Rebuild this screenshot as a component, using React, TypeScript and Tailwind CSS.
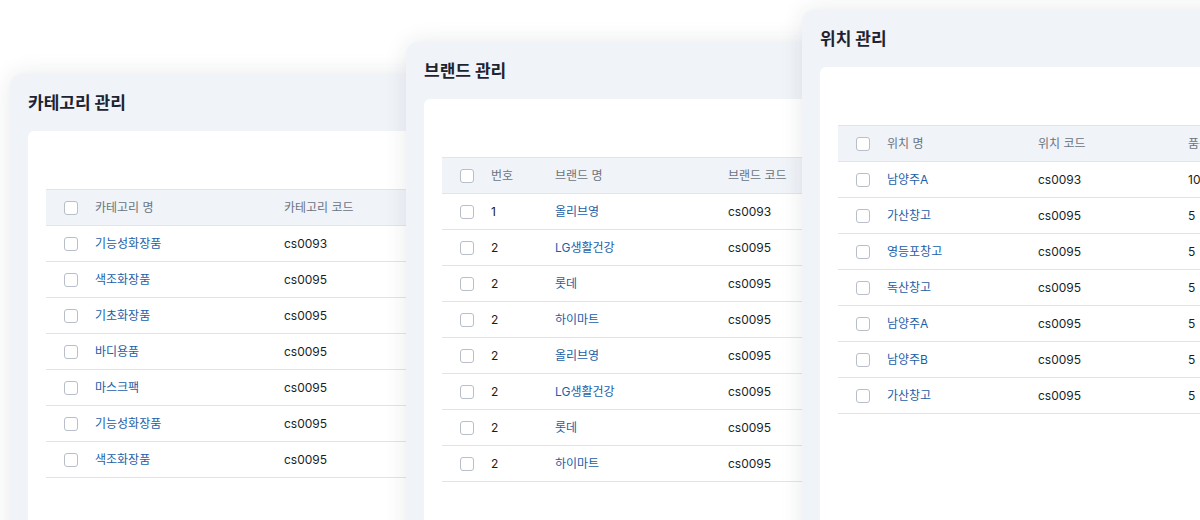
import React from "react";

type Cell = { text: string; link?: boolean };

interface PanelProps {
  title: string;
  left: string;
  top: string;
  cols: string;
  headers: string[];
  rows: Cell[][];
  z: string;
}

function Checkbox() {
  return <span className="block w-[14px] h-[14px] rounded-[3px] border border-[#b8bfc9] bg-white" />;
}

function Panel({ title, left, top, cols, headers, rows, z }: PanelProps) {
  return (
    <div
      className={`absolute ${left} ${top} ${z} w-[580px] h-[560px] rounded-[12px] bg-[#f0f3f8] shadow-[0_0_22px_rgba(30,40,60,0.10)]`}
    >
      <h2 className="px-[18px] pt-[18px] h-[57px] text-[17px] font-bold text-[#1d2430] leading-[22px]">
        {title}
      </h2>
      <div className="mx-[18px] h-[500px] rounded-[6px] bg-white pt-[58px] pl-[18px]">
        <div className="text-[12px]">
          <div className={`grid ${cols} items-center h-[37px] bg-[#f0f3f8] border-y border-[#dfe5ed] text-[#6a737f]`}>
            <div className="pl-[18px]">
              <Checkbox />
            </div>
            {headers.map((h) => (
              <div key={h} className="whitespace-nowrap">
                {h}
              </div>
            ))}
          </div>
          {rows.map((r, i) => (
            <div key={i} className={`grid ${cols} items-center h-[36px] border-b border-[#dfe5ed] text-[#1a1e24]`}>
              <div className="pl-[18px]">
                <Checkbox />
              </div>
              {r.map((c, j) => (
                <div key={j} className={`whitespace-nowrap ${c.link ? "text-[#1b5ea8]" : ""}`}>
                  {c.text}
                </div>
              ))}
            </div>
          ))}
        </div>
      </div>
    </div>
  );
}

const categories = ["기능성화장품", "색조화장품", "기초화장품", "바디용품", "마스크팩", "기능성화장품", "색조화장품"];
const catCodes = ["cs0093", "cs0095", "cs0095", "cs0095", "cs0095", "cs0095", "cs0095"];

const brands = ["올리브영", "LG생활건강", "롯데", "하이마트", "올리브영", "LG생활건강", "롯데", "하이마트"];

const places = ["남양주A", "가산창고", "영등포창고", "독산창고", "남양주A", "남양주B", "가산창고"];

export default function App() {
  return (
    <div
      className="relative w-[1200px] h-[520px] overflow-hidden bg-white"
      style={{ fontFamily: '"Inter", "Noto Sans CJK KR", sans-serif' }}
    >
      <Panel
        title="카테고리 관리"
        left="left-[10px]"
        top="top-[74px]"
        z="z-10"
        cols="grid-cols-[49px_189px_1fr]"
        headers={["카테고리 명", "카테고리 코드"]}
        rows={categories.map((c, i) => [{ text: c, link: true }, { text: catCodes[i] }])}
      />
      <Panel
        title="브랜드 관리"
        left="left-[406px]"
        top="top-[42px]"
        z="z-20"
        cols="grid-cols-[49px_64px_173px_1fr]"
        headers={["번호", "브랜드 명", "브랜드 코드"]}
        rows={brands.map((b, i) => [
          { text: i === 0 ? "1" : "2" },
          { text: b, link: true },
          { text: i === 0 ? "cs0093" : "cs0095" },
        ])}
      />
      <Panel
        title="위치 관리"
        left="left-[802px]"
        top="top-[10px]"
        z="z-30"
        cols="grid-cols-[49px_151px_150px_1fr]"
        headers={["위치 명", "위치 코드", "품목 수"]}
        rows={places.map((p, i) => [
          { text: p, link: true },
          { text: i === 0 ? "cs0093" : "cs0095" },
          { text: i === 0 ? "10" : "5" },
        ])}
      />
    </div>
  );
}
